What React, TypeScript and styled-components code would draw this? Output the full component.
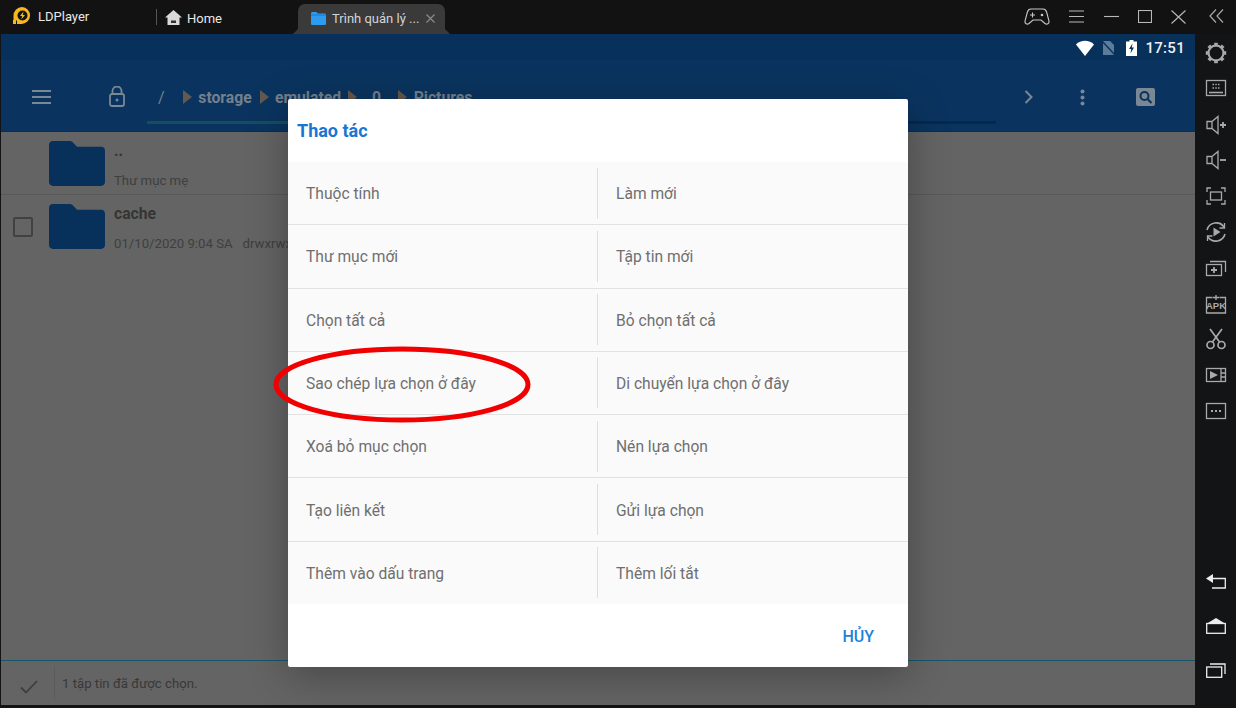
import styled, { createGlobalStyle } from "styled-components";

const GlobalStyle = createGlobalStyle`
  html, body {
    margin: 0;
    padding: 0;
    background: #121315;
    overflow: hidden;
  }
  * { box-sizing: border-box; }
`;

const ACTIONS = [
  ["Thuộc tính", "Làm mới"],
  ["Thư mục mới", "Tập tin mới"],
  ["Chọn tất cả", "Bỏ chọn tất cả"],
  ["Sao chép lựa chọn ở đây", "Di chuyển lựa chọn ở đây"],
  ["Xoá bỏ mục chọn", "Nén lựa chọn"],
  ["Tạo liên kết", "Gửi lựa chọn"],
  ["Thêm vào dấu trang", "Thêm lối tắt"],
];

const CRUMBS = [
  { label: "storage", width: 54 },
  { label: "emulated", width: 65 },
  { label: "0", width: 27 },
  { label: "Pictures", width: 60 },
];

const GEAR_DOTS = [0, 45, 90, 135, 180, 225, 270, 315];

function FolderIcon() {
  return (
    <svg width="56" height="45" viewBox="0 0 58 46" preserveAspectRatio="none">
      <path
        d="M4 0h17c2 0 3 .6 4.300 2l3.700 4h25c2.300 0 4 1.700 4 4v32c0 2.300-1.700 4-4 4H4c-2.300 0-4-1.700-4-4V4c0-2.300 1.700-4 4-4z"
        fill="#07315b"
      />
    </svg>
  );
}

function SideIcon({ children, h = 24 }: { children: React.ReactNode; h?: number }) {
  return (
    <svg width="24" height={h} viewBox={`0 0 24 ${h}`} fill="none" stroke="#a9a9a9" strokeWidth="1.300">
      {children}
    </svg>
  );
}

export default function App() {
  return (
    <Page>
      <GlobalStyle />
      <TitleBar>
        <Brand>
          <svg width="20" height="20" viewBox="0 0 20 20">
            <path d="M10 1a8.500 8.500 0 1 1-1 17H5v-3.500H1.500V10A8.500 8.500 0 0 1 10 1z" fill="#f5b81f" />
            <circle cx="10.500" cy="9.500" r="5" fill="#141414" />
            <path d="M11.500 5.500 8 10h2.200L9.300 13.500 13 9h-2.200z" fill="#f5b81f" />
            <rect x="1" y="14" width="3" height="4" fill="#f5b81f" />
          </svg>
          <BrandName>LDPlayer</BrandName>
        </Brand>
        <TabDivider />
        <HomeTab>
          <svg width="17" height="15" viewBox="0 0 17 15">
            <path d="M8.500 0 17 7.500h-2.500V15h-12V7.500H0z" fill="#d9d9d9" />
            <rect x="6" y="10.500" width="5" height="2.500" fill="#333" />
          </svg>
          <HomeLabel>Home</HomeLabel>
        </HomeTab>
        <ActiveTab>
          <svg width="15" height="13" viewBox="0 0 15 13">
            <path d="M0 1.500C0 .7.600 0 1.400 0h4l1.300 1.500h7c.7 0 1.300.6 1.300 1.300v8.900c0 .7-.6 1.300-1.300 1.300H1.400C.6 13 0 12.400 0 11.700z" fill="#2d9bf0" />
            <rect y="2.500" width="15" height="1" fill="#1a78c9" />
          </svg>
          <TabLabel>Trình quản lý ...</TabLabel>
          <svg width="9" height="9" viewBox="0 0 9 9" stroke="#8a8a8a" strokeWidth="1.200">
            <path d="M.5.500l8 8M8.500.500l-8 8" />
          </svg>
        </ActiveTab>
        <WindowControls>
          <svg width="26" height="18" viewBox="0 0 26 18" fill="none" stroke="#c8c8c8" strokeWidth="1.100">
            <path d="M7 1h12c2 0 3 1 3.600 3l2.400 9c.5 2.500-2 4-4 2.500L17 12H9l-4 3.500c-2 1.500-4.500 0-4-2.500l2.400-9C4 2 5 1 7 1z" />
            <path d="M6 7h5M8.500 4.500v5" />
            <circle cx="18" cy="7" r="1.300" fill="#c8c8c8" stroke="none" />
          </svg>
          <svg width="15" height="13" viewBox="0 0 15 13" stroke="#b8b8b8" strokeWidth="1.100">
            <path d="M0 1h15M0 6.500h15M0 12h15" />
          </svg>
          <svg width="15" height="13" viewBox="0 0 15 13" stroke="#b8b8b8" strokeWidth="1.100">
            <path d="M0 6.500h15" />
          </svg>
          <svg width="14" height="13" viewBox="0 0 14 13" fill="none" stroke="#b8b8b8" strokeWidth="1.100">
            <rect x=".5" y=".5" width="13" height="12" />
          </svg>
          <svg width="15" height="14" viewBox="0 0 15 14" stroke="#b8b8b8" strokeWidth="1.100">
            <path d="M.5.500l14 13M14.500.500l-14 13" />
          </svg>
        </WindowControls>
        <CollapseSlot>
          <svg width="15" height="14" viewBox="0 0 15 14" fill="none" stroke="#a9a9a9" strokeWidth="1.200">
            <path d="M7 .5 1 7l6 6.500M14 .5 8 7l6 6.500" />
          </svg>
        </CollapseSlot>
      </TitleBar>

      <Body>
        <Screen>
          <StatusBar>
            <WifiIcon width="18" height="16" viewBox="0 0 18 16">
              <path d="M0 4.500C4.500-.5 13.500-.5 18 4.500L9 16z" fill="#fff" />
            </WifiIcon>
            <SimIcon width="13" height="14" viewBox="0 0 13 14">
              <path d="M1 0h7l4 4v10H1z" fill="#5d7c9b" />
              <path d="M0 0l13 14" stroke="#0a335c" strokeWidth="1.500" />
            </SimIcon>
            <svg width="11" height="16" viewBox="0 0 11 16">
              <path d="M3.500 0h4v1.500H11V16H0V1.500h3.500z" fill="#fff" />
              <path d="M6.500 3.500 3 9h2.200L4.500 13.500 8 7.500H5.800z" fill="#0a335c" />
            </svg>
            <Clock>17:51</Clock>
          </StatusBar>
          <Toolbar>
            <MenuSlot>
              <svg width="19" height="14" viewBox="0 0 19 14" stroke="#7a8794" strokeWidth="2">
                <path d="M0 1h19M0 7h19M0 13h19" />
              </svg>
            </MenuSlot>
            <LockSlot>
              <svg width="16" height="21" viewBox="0 0 16 21" fill="none" stroke="#7a8794" strokeWidth="1.800">
                <rect x="1" y="8" width="14" height="12" rx="2" />
                <path d="M3.500 8V5a4.500 4.500 0 0 1 9 0v3" />
                <circle cx="8" cy="14" r="1.500" fill="#7a8794" stroke="none" />
              </svg>
            </LockSlot>
            <Breadcrumb>
              <Root>/</Root>
              {CRUMBS.map((crumb) => (
                <Crumb key={crumb.label}>
                  <CrumbArrow />
                  <CrumbText $width={crumb.width}>{crumb.label}</CrumbText>
                </Crumb>
              ))}
            </Breadcrumb>
            <ToolbarActions>
              <svg width="9" height="14" viewBox="0 0 9 14" fill="none" stroke="#7a8794" strokeWidth="2">
                <path d="M1.500 1l6 6-6 6" />
              </svg>
              <svg width="5" height="17" viewBox="0 0 5 17" fill="#7a8794">
                <circle cx="2.500" cy="2.500" r="2" />
                <circle cx="2.500" cy="8.500" r="2" />
                <circle cx="2.500" cy="14.500" r="2" />
              </svg>
              <svg width="19" height="18" viewBox="0 0 19 18">
                <rect width="19" height="18" rx="2" fill="#7a8794" />
                <circle cx="8.500" cy="8" r="4" fill="none" stroke="#0a335c" strokeWidth="2" />
                <path d="M11.500 11l4 4" stroke="#0a335c" strokeWidth="2.200" />
              </svg>
            </ToolbarActions>
            <PathProgress />
          </Toolbar>
          <FileList>
            <FileRow>
              <CheckSlot />
              <FolderIcon />
              <FileInfo>
                <FileName>..</FileName>
                <FileMeta>Thư mục mẹ</FileMeta>
              </FileInfo>
            </FileRow>
            <FileRow>
              <CheckSlot>
                <CheckBox />
              </CheckSlot>
              <FolderIcon />
              <FileInfo>
                <FileName>cache</FileName>
                <FileMeta>
                  01/10/2020 9:04 SA<Perms>drwxrwx---</Perms>
                </FileMeta>
              </FileInfo>
            </FileRow>
          </FileList>
          <SelectionBar>
            <ConfirmSlot>
              <svg width="18" height="14" viewBox="0 0 18 14" fill="none" stroke="#3e3e3e" strokeWidth="1.800">
                <path d="M1 7.500l5 5L17 1" />
              </svg>
            </ConfirmSlot>
            <SelectionText>1 tập tin đã được chọn.</SelectionText>
          </SelectionBar>
        </Screen>
        <SideBar>
          <SideGroup>
            <SideIcon>
              <circle cx="12" cy="12" r="7.500" strokeWidth="2" />
              {GEAR_DOTS.map((angle) => (
                <rect
                  key={angle}
                  x="10.200"
                  y="1.800"
                  width="3.600"
                  height="3.600"
                  fill="#a9a9a9"
                  stroke="none"
                  transform={`rotate(${angle} 12 12)`}
                />
              ))}
            </SideIcon>
            <SideIcon>
              <rect x="2.500" y="3.500" width="19" height="15" />
              <path d="M5 15.500h14" strokeWidth="1.600" />
              <path d="M8.500 7.500h1.500M11.300 7.500h1.500M14 7.500h1.500M8.500 11h1.500M11.300 11h1.500M14 11h1.500" strokeWidth="1.600" />
            </SideIcon>
            <SideIcon>
              <path d="M3 8.500h5v7H3zM8 8.500 14 3.500v17l-6-5" />
              <path d="M16 12h6M19 9v6" strokeWidth="1.800" />
            </SideIcon>
            <SideIcon>
              <path d="M3 8.500h5v7H3zM8 8.500 14 3.500v17l-6-5" />
              <path d="M16 12h6" strokeWidth="1.800" />
            </SideIcon>
            <SideIcon>
              <path d="M3 8V4h4M17 4h4v4M21 16v4h-4M7 20H3v-4" />
              <rect x="6.500" y="8" width="11" height="8" />
            </SideIcon>
            <SideIcon>
              <path d="M3 10a9.500 9.500 0 0 1 17-3M21 14a9.500 9.500 0 0 1-17 3" strokeWidth="1.600" />
              <path d="M20.500 3v5h-5M3.500 21v-5h5" strokeWidth="1.300" />
              <path d="M9.500 7.500v9l7-4.500z" fill="#a9a9a9" stroke="none" />
            </SideIcon>
            <SideIcon>
              <rect x="2.500" y="8.500" width="15" height="11" />
              <path d="M6 5.500h15.500V16" />
              <path d="M7 14h6M10 11v6" strokeWidth="1.800" />
            </SideIcon>
            <SideIcon>
              <path d="M8.500 5.500h-6v15.500h19V5.500h-6" />
              <path d="M9 5.500h6M12 3v5" />
              <text x="12" y="17" fontFamily="'Liberation Sans', sans-serif" fontSize="9.500" fontWeight="700" fill="#a9a9a9" stroke="none" textAnchor="middle">APK</text>
            </SideIcon>
            <SideIcon>
              <circle cx="6.500" cy="18" r="3.500" strokeWidth="1.700" />
              <circle cx="17.500" cy="18" r="3.500" strokeWidth="1.700" />
              <path d="M8.500 15 18 2M15.500 15 6 2" strokeWidth="1.700" />
            </SideIcon>
            <SideIcon>
              <rect x="2.500" y="5.500" width="19" height="13" />
              <path d="M17 5.500v13M17 10h4.500M17 14h4.500" />
              <path d="M6 8v8l8-4z" fill="#a9a9a9" stroke="none" />
            </SideIcon>
            <SideIcon>
              <rect x="2.500" y="4.500" width="19" height="15" />
              <path d="M7 12h2M11 12h2M15 12h2" strokeWidth="1.800" />
            </SideIcon>
          </SideGroup>
          <NavGroup>
            <svg width="20" height="15" viewBox="0 0 20 15" fill="none" stroke="#ededed" strokeWidth="1.300">
              <path d="M7 0v9L0 4.500z" fill="#ededed" stroke="none" />
              <path d="M6 4.500h13.300v9.500H6" />
            </svg>
            <svg width="20" height="16" viewBox="0 0 20 16">
              <path d="M10 0l9 5.500H1z" fill="#ededed" />
              <rect x=".7" y="5.500" width="18.600" height="9.800" fill="none" stroke="#ededed" strokeWidth="1.300" />
            </svg>
            <svg width="20" height="15" viewBox="0 0 20 15" fill="none" stroke="#ededed" strokeWidth="1.300">
              <rect x=".7" y="4" width="15" height="10.300" />
              <path d="M4 1h15v10" />
            </svg>
          </NavGroup>
        </SideBar>
      </Body>

      <Dialog>
        <DialogTitle>Thao tác</DialogTitle>
        <ActionList>
          {ACTIONS.map(([left, right]) => (
            <ActionRow key={left}>
              <ActionCell>{left}</ActionCell>
              <ActionCell $second>{right}</ActionCell>
            </ActionRow>
          ))}
        </ActionList>
        <DialogFooter>
          <CancelButton>HỦY</CancelButton>
        </DialogFooter>
      </Dialog>
      <Highlight width="262" height="80" viewBox="0 0 262 80">
        <ellipse cx="130" cy="39.500" rx="126" ry="35.500" fill="none" stroke="#f00000" strokeWidth="5" />
      </Highlight>
    </Page>
  );
}

const Page = styled.div`
  position: relative;
  width: 1236px;
  height: 708px;
  display: flex;
  flex-direction: column;
  overflow: hidden;
  background: #121315;
  font-family: Roboto, "Liberation Sans", sans-serif;
`;

const TitleBar = styled.header`
  height: 34px;
  flex: none;
  display: flex;
  align-items: center;
  background: #121212;
  color: #e8e8e8;
  font-size: 13px;
`;

const Brand = styled.div`
  width: 156px;
  display: flex;
  align-items: center;
  gap: 6px;
  padding: 0 0 3px 12px;
`;

const BrandName = styled.span`
  position: relative;
  top: 1px;
`;

const TabDivider = styled.span`
  width: 1px;
  height: 16px;
  background: #555;
`;

const HomeTab = styled.div`
  width: 141px;
  display: flex;
  align-items: center;
  gap: 5px;
  padding-left: 8px;
`;

const HomeLabel = styled.span`
  position: relative;
  top: 1px;
`;

const ActiveTab = styled.div`
  position: relative;
  width: 147px;
  height: 30px;
  margin-top: 4px;
  display: flex;
  align-items: center;
  padding: 0 10px 2px 13px;
  background: #3a3a3a;
  border-radius: 7px 7px 0 0;
  color: #d4d4d4;

  &::before,
  &::after {
    content: "";
    position: absolute;
    bottom: 0;
    width: 5px;
    height: 5px;
    background: #3a3a3a;
  }
  &::before {
    left: -5px;
    clip-path: polygon(100% 0, 100% 100%, 0 100%);
  }
  &::after {
    right: -5px;
    clip-path: polygon(0 0, 100% 100%, 0 100%);
  }
`;

const TabLabel = styled.span`
  flex: 1;
  margin-left: 6px;
  white-space: nowrap;
`;

const WindowControls = styled.div`
  display: flex;
  align-items: center;
  justify-content: space-between;
  width: 162px;
  margin-left: auto;
  padding-bottom: 1px;
`;

const CollapseSlot = styled.div`
  width: 40px;
  margin-left: 10px;
  display: flex;
  justify-content: center;
  padding-bottom: 2px;
`;

const Body = styled.div`
  flex: 1;
  display: flex;
  min-height: 0;
`;

const Screen = styled.main`
  width: 1195px;
  height: 671px;
  padding-left: 1px;
  display: flex;
  flex-direction: column;
`;

const StatusBar = styled.div`
  height: 26px;
  flex: none;
  display: flex;
  align-items: center;
  justify-content: flex-end;
  padding: 2px 10px 0 0;
  background: #07305a;
`;

const WifiIcon = styled.svg`
  margin-right: 8px;
`;

const SimIcon = styled.svg`
  margin-right: 11px;
`;

const Clock = styled.span`
  margin-left: 8px;
  color: #f0f0f0;
  font-size: 15px;
  font-weight: 500;
  letter-spacing: 0.3px;
`;

const Toolbar = styled.div`
  position: relative;
  height: 72px;
  flex: none;
  display: flex;
  align-items: center;
  padding-top: 2px;
  background: #0a345f;
  border-bottom: 1px solid #05305c;
`;

const MenuSlot = styled.div`
  width: 108px;
  padding-left: 31px;
  display: flex;
`;

const LockSlot = styled.div`
  width: 49px;
  display: flex;
`;

const Breadcrumb = styled.nav`
  display: flex;
  align-items: center;
  padding-top: 1px;
  color: #74808d;
  font-size: 15.700px;
  font-weight: 700;
`;

const Root = styled.span`
  width: 25px;
  font-weight: 400;
  font-size: 16px;
`;

const Crumb = styled.span`
  display: flex;
  align-items: center;
  gap: 6px;
  margin-right: 8px;
`;

const CrumbArrow = styled.i`
  width: 0;
  height: 0;
  border-style: solid;
  border-width: 7px 0 7px 9px;
  border-color: transparent transparent transparent #63594f;
`;

const CrumbText = styled.span<{ $width: number }>`
  width: ${(p) => p.$width}px;
  text-align: center;
  white-space: nowrap;
`;

const ToolbarActions = styled.div`
  position: absolute;
  top: 28px;
  right: 40px;
  display: flex;
  align-items: center;
  gap: 51px;

  & > svg:first-child {
    margin-right: -4px;
  }
`;

const PathProgress = styled.div`
  position: absolute;
  left: 146px;
  top: 61px;
  width: 849px;
  height: 3px;
  background: linear-gradient(90deg, #12505f 0 20%, #05294e 20%);
`;

const FileList = styled.div`
  flex: 1;
  background: #646464;
`;

const FileRow = styled.div`
  height: 63px;
  display: flex;
  align-items: center;
  border-bottom: 1px solid #585858;

  &:last-child {
    border-bottom: none;
  }
`;

const CheckSlot = styled.div`
  width: 48px;
  padding-left: 12px;
  display: flex;
`;

const CheckBox = styled.span`
  width: 20px;
  height: 20px;
  border: 2px solid #414141;
  border-radius: 2px;
`;

const FileInfo = styled.div`
  align-self: stretch;
  margin-left: 9px;
  padding-top: 10px;
  white-space: nowrap;
`;

const FileName = styled.div`
  color: #353535;
  font-size: 15.700px;
  font-weight: 700;
  line-height: 18px;
`;

const FileMeta = styled.div`
  margin-top: 13px;
  color: #3f3f3f;
  font-size: 13.200px;
  line-height: 16px;
`;

const Perms = styled.span`
  margin-left: 10px;
`;

const SelectionBar = styled.div`
  height: 45px;
  flex: none;
  display: flex;
  align-items: center;
  background: #646464;
  border-top: 1px solid #17556b;
`;

const ConfirmSlot = styled.div`
  width: 54px;
  height: 32px;
  padding: 12px 0 0 19px;
  border-right: 1px solid #5a5a5a;
`;

const SelectionText = styled.span`
  margin-left: 7px;
  color: #383838;
  font-size: 13.200px;
`;

const SideBar = styled.aside`
  width: 41px;
  height: 671px;
  display: flex;
  flex-direction: column;
  align-items: center;
  justify-content: space-between;
  padding: 7px 0 27px 1px;
  background: #131416;
`;

const SideGroup = styled.div`
  display: flex;
  flex-direction: column;
  gap: 11.800px;
`;

const NavGroup = styled.div`
  display: flex;
  flex-direction: column;
  align-items: center;
  gap: 29px;
`;

const Dialog = styled.section`
  position: absolute;
  left: 288px;
  top: 99px;
  width: 620px;
  height: 568px;
  display: flex;
  flex-direction: column;
  background: #fff;
  border-radius: 2px;
  box-shadow: 0 8px 40px rgba(0, 0, 0, 0.3);
`;

const DialogTitle = styled.h2`
  height: 63px;
  margin: 0;
  padding: 21px 0 0 9px;
  color: #1976d2;
  font-size: 18px;
  font-weight: 700;
  line-height: 22px;
`;

const ActionList = styled.div`
  height: 442px;
  flex: none;
  display: flex;
  flex-direction: column;
  background: #fafafa;
`;

const ActionRow = styled.div`
  flex: 1;
  display: grid;
  grid-template-columns: 309px 311px;
  align-items: center;
  border-bottom: 1px solid #e2e2e2;

  &:last-child {
    border-bottom: none;
  }
`;

const ActionCell = styled.div<{ $second?: boolean }>`
  height: 51px;
  display: flex;
  align-items: center;
  padding: 2px 0 0 18px;
  color: #6f6f6f;
  font-size: 15.600px;
  border-left: ${(p) => (p.$second ? "1px solid #dedede" : "none")};
`;

const DialogFooter = styled.div`
  flex: 1;
  display: flex;
  align-items: center;
  justify-content: flex-end;
  padding: 2px 34px 0 0;
`;

const CancelButton = styled.button`
  padding: 0;
  border: none;
  background: none;
  color: #1e7fdc;
  font-family: inherit;
  font-size: 16px;
  font-weight: 500;
`;

const Highlight = styled.svg`
  position: absolute;
  left: 272px;
  top: 345px;
`;
